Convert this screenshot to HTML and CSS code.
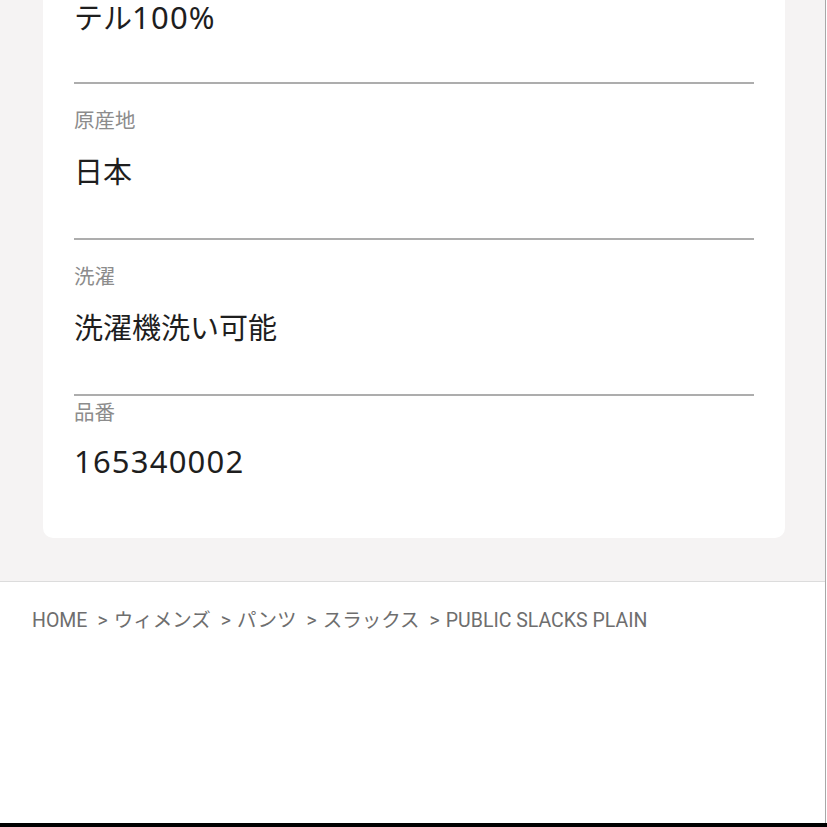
FILE: index.html
```html
<!DOCTYPE html>
<html lang="ja">
<head>
<meta charset="utf-8">
<title>PUBLIC SLACKS PLAIN</title>
<link rel="stylesheet" href="styles.css">
</head>
<body>
<div class="page">
  <section class="specs">
    <div class="card">
      <div class="row first">
        <div class="value">テル<span class="num">100%</span></div>
      </div>
      <div class="row">
        <div class="label">原産地</div>
        <div class="value">日本</div>
      </div>
      <div class="row">
        <div class="label">洗濯</div>
        <div class="value">洗濯機洗い可能</div>
      </div>
      <div class="row last">
        <div class="label">品番</div>
        <div class="value"><span class="num">165340002</span></div>
      </div>
    </div>
  </section>
  <nav class="breadcrumb">
    <ol class="crumbs">
      <li class="crumb">HOME</li>
      <li class="crumb">ウィメンズ</li>
      <li class="crumb">パンツ</li>
      <li class="crumb">スラックス</li>
      <li class="crumb">PUBLIC SLACKS PLAIN</li>
    </ol>
  </nav>
</div>
<div class="bottom-bar"></div>
</body>
</html>
```

FILE: styles.css
```css
html, body {
  margin: 0;
  padding: 0;
  background: #ffffff;
}

.page {
  width: 826px;
  box-sizing: border-box;
  border-right: 1px solid #a8a8a8;
  font-family: "Noto Sans", "Noto Sans CJK JP", sans-serif;
}

.specs {
  background: #f5f3f3;
  padding: 0 40px 43px 43px;
  border-bottom: 1px solid #dcdcdc;
}

.card {
  background: #ffffff;
  border-radius: 0 0 10px 10px;
  padding: 0 31px;
}

.row {
  padding: 21px 0 48px;
  border-bottom: 2px solid #adadad;
}

.row.first {
  padding: 0 0 49px;
}

.row.first .value {
  line-height: 32px;
}

.row.last {
  padding: 1px 0 57px;
  border-bottom: none;
}

.label {
  font-family: "Noto Sans CJK JP", sans-serif;
  font-size: 20.5px;
  line-height: 28px;
  color: #8c8c8c;
  margin-bottom: 17px;
}

.row.last .label {
  margin-bottom: 15px;
}

.value {
  font-family: "Noto Sans CJK JP", sans-serif;
  font-size: 29px;
  line-height: 40px;
  color: #1e1e1e;
}

.num {
  font-family: "Noto Sans", sans-serif;
  font-size: 31px;
  letter-spacing: 1.2px;
}

.breadcrumb {
  height: 241px;
  box-sizing: border-box;
  padding: 25px 32px 0;
}

.crumbs {
  list-style: none;
  margin: 0;
  padding: 0;
  display: flex;
  font-family: Roboto, "Noto Sans CJK JP", sans-serif;
  font-size: 19.5px;
  line-height: 28px;
  color: #6e6e6e;
}

.crumb + .crumb::before {
  content: ">";
  margin: 0 6px 0 10px;
}

.bottom-bar {
  height: 5px;
  background: #000000;
}
```
